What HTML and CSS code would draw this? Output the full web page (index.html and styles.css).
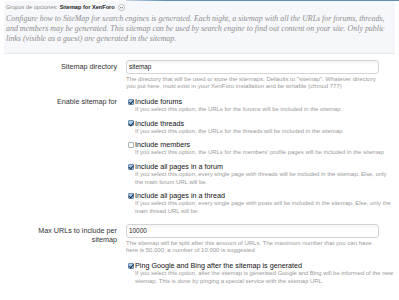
FILE: index.html
```html
<!DOCTYPE html>
<html>
<head>
<meta charset="utf-8">
<title>Sitemap for XenForo</title>
<link rel="stylesheet" href="styles.css">
</head>
<body>
<div class="tabline"></div>
<div class="opts_head">
	<div class="group_title">Grupos de opciones: <b>Sitemap for XenForo</b>
		<svg class="drop" width="7" height="7" viewBox="0 0 14 14"><circle cx="7" cy="7" r="6" fill="#fff" stroke="#999" stroke-width="1.2"/><path d="M4.2 5.8 L7 8.6 L9.8 5.8" fill="none" stroke="#555" stroke-width="1.6"/></svg>
	</div>
	<p class="group_desc">Configure how to SiteMap for search engines is generated. Each night, a sitemap with all the URLs for forums, threads, and members may be generated. This sitemap can be used by search engine to find out content on your site. Only public links (visible as a guest) are generated in the sitemap.</p>
</div>

<div class="opts_form">
	<div class="ctrl_unit">
		<div class="ctrl_label">Sitemap directory</div>
		<div class="ctrl_body">
			<div class="textbox">sitemap</div>
			<p class="explain">The directory that will be used to store the sitemaps. Defaults to "sitemap". Whatever directory you put here, must exist in your XenForo installation and be writable (chmod 777)</p>
		</div>
	</div>

	<div class="ctrl_unit list_unit">
		<div class="ctrl_label">Enable sitemap for</div>
		<ul class="ctrl_body checks">
			<li><span class="cb on"></span><span class="cb_text">Include forums</span>
				<p class="hint">If you select this option, the URLs for the forums will be included in the sitemap</p></li>
			<li><span class="cb on"></span><span class="cb_text">Include threads</span>
				<p class="hint">If you select this option, the URLs for the threads will be included in the sitemap</p></li>
			<li><span class="cb"></span><span class="cb_text">Include members</span>
				<p class="hint">If you select this option, the URLs for the members' profile pages will be included in the sitemap</p></li>
			<li><span class="cb on"></span><span class="cb_text">Include all pages in a forum</span>
				<p class="hint">If you select this option, every single page with threads will be included in the sitemap. Else, only the main forum URL will be.</p></li>
			<li><span class="cb on"></span><span class="cb_text">Include all pages in a thread</span>
				<p class="hint">If you select this option, every single page with posts will be included in the sitemap. Else, only the main thread URL will be.</p></li>
		</ul>
	</div>

	<div class="ctrl_unit">
		<div class="ctrl_label two">Max URLs to include per sitemap</div>
		<div class="ctrl_body">
			<div class="textbox">10000</div>
			<p class="explain">The sitemap will be split after this amount of URLs. The maximum number that you can have here is 50,000, a number of 10,000 is suggested</p>
		</div>
	</div>

	<div class="ctrl_unit list_unit">
		<div class="ctrl_label"></div>
		<ul class="ctrl_body checks">
			<li><span class="cb on"></span><span class="cb_text">Ping Google and Bing after the sitemap is generated</span>
				<p class="hint">If you select this option, after the sitemap is generated Google and Bing will be informed of the new sitemap. This is done by pinging a special service with the sitemap URL.</p></li>
		</ul>
	</div>
</div>
</body>
</html>
```

FILE: styles.css
```css
body {margin:0;background:#fff;font-family:"Liberation Sans",Arial,sans-serif;color:#222;}
ul {margin:0;padding:0;list-style:none;}
p {margin:0;}

.tabline {height:1px;margin-left:126px;background:linear-gradient(to right,#c9d9e8,#5f8db5 40px);}
.opts_head {background:#f6f7fa;padding:2px 4px 0 2px;height:50px;border-bottom:1px solid #e6e8ec;margin:0 4px;}
.group_title {font-size:5.6px;line-height:8px;color:#8a8a8a;display:flex;align-items:center;gap:2px;}
.group_title b {color:#222;}
.drop {margin-left:1px;}
.group_desc {font-family:"Liberation Serif","Times New Roman",serif;font-style:italic;font-size:7.9px;line-height:10px;color:#8e8e8e;margin-top:3px;}

.opts_form {padding:6px 0 0 0;}
.ctrl_unit {display:flex;margin-bottom:6.5px;}
.ctrl_label {width:117px;flex:none;text-align:right;font-size:7.2px;line-height:14px;color:#333;}
.ctrl_label.two {line-height:8.4px;padding-top:3px;padding-left:32px;box-sizing:border-box;}
.ctrl_body {margin-left:9px;width:253px;}
.textbox {height:14px;box-sizing:border-box;border:1px solid #d4d4d4;border-radius:3px;background:linear-gradient(#f4f4f4,#fff 4px);font-size:6.4px;line-height:12px;padding-left:2px;color:#222;}
.explain {font-size:6px;line-height:7.5px;color:#9a9a9a;margin-top:1.5px;}

.list_unit .ctrl_label {line-height:9px;}
.list_unit {margin-bottom:4px;}
.checks {width:268px;}
.checks li {margin-bottom:5.3px;padding-left:9px;position:relative;}
.cb_text {font-size:7.2px;line-height:9px;display:block;color:#111;}
.cb {position:absolute;left:1.5px;top:1.5px;width:6.2px;height:6.2px;box-sizing:border-box;border:1px solid #aab0b8;border-radius:1px;background:#fff;}
.cb.on {background:#a9cbeb;border-color:#6f8eaf;}
.cb.on:after {content:"";position:absolute;left:1.6px;top:-0.6px;width:1.6px;height:3.6px;border:solid #1d2f48;border-width:0 1.3px 1.3px 0;transform:rotate(40deg);}
.hint {font-size:5.9px;line-height:7.4px;color:#9a9a9a;}
```
